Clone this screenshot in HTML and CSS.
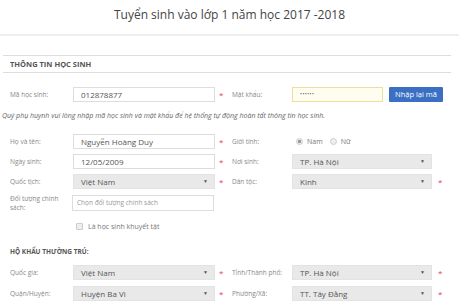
FILE: index.html
```html
<!DOCTYPE html>
<html>
<head>
    <meta charset="utf-8">
    <link rel="stylesheet" href="styles.css">
</head>
<body>
    <div class="page">
        <h1 class="title">Tuyển sinh vào lớp 1 năm học 2017 -2018</h1>
        <div class="section-head">THÔNG TIN HỌC SINH</div>

        <div class="row first">
            <div class="field">
                <label class="lbl">Mã học sinh:</label>
                <div class="input">012878877</div>
                <span class="star">*</span>
            </div>
            <div class="field right">
                <label class="lbl">Mật khẩu:</label>
                <div class="input pass">••••••</div>
                <button class="btn">Nhập lại mã</button>
            </div>
        </div>

        <p class="note">Quý phụ huynh vui lòng nhập mã học sinh và mật khẩu để hệ thống tự động hoàn tất thông tin học sinh.</p>

        <div class="row">
            <div class="field">
                <label class="lbl">Họ và tên:</label>
                <div class="input">Nguyễn Hoàng Duy</div>
                <span class="star">*</span>
            </div>
            <div class="field right">
                <label class="lbl">Giới tính:</label>
                <div class="radios">
                    <span class="radio on"></span><span class="opt">Nam</span>
                    <span class="radio"></span><span class="opt">Nữ</span>
                </div>
            </div>
        </div>

        <div class="row">
            <div class="field">
                <label class="lbl">Ngày sinh:</label>
                <div class="input">12/05/2009</div>
                <span class="star">*</span>
            </div>
            <div class="field right">
                <label class="lbl">Nơi sinh:</label>
                <div class="select">TP. Hà Nội<span class="caret">▼</span></div>
            </div>
        </div>

        <div class="row">
            <div class="field">
                <label class="lbl">Quốc tịch:</label>
                <div class="select">Việt Nam<span class="caret">▼</span></div>
                <span class="star">*</span>
            </div>
            <div class="field right">
                <label class="lbl">Dân tộc:</label>
                <div class="select">Kinh<span class="caret">▼</span></div>
                <span class="star">*</span>
            </div>
        </div>

        <div class="row tall">
            <div class="field">
                <label class="lbl two">Đối tượng chính sách:</label>
                <div class="input placeholder">Chọn đối tượng chính sách</div>
            </div>
        </div>

        <div class="check-row">
            <span class="checkbox"></span><span class="opt">Là học sinh khuyết tật</span>
        </div>

        <div class="sub-head">HỘ KHẨU THƯỜNG TRÚ:</div>

        <div class="row">
            <div class="field">
                <label class="lbl">Quốc gia:</label>
                <div class="select">Việt Nam<span class="caret">▼</span></div>
                <span class="star">*</span>
            </div>
            <div class="field right">
                <label class="lbl">Tỉnh/Thành phố:</label>
                <div class="select">TP. Hà Nội<span class="caret">▼</span></div>
                <span class="star">*</span>
            </div>
        </div>

        <div class="row">
            <div class="field">
                <label class="lbl">Quận/Huyện:</label>
                <div class="select">Huyện Ba Vì<span class="caret">▼</span></div>
                <span class="star">*</span>
            </div>
            <div class="field right">
                <label class="lbl">Phường/Xã:</label>
                <div class="select">TT. Tây Đằng<span class="caret">▼</span></div>
                <span class="star">*</span>
            </div>
        </div>
    </div>
</body>
</html>
```
FILE: styles.css
```css
body {
    margin: 0;
    background: #fff;
    font-family: 'Open Sans', Arial, sans-serif;
    color: #555;
}
.page {
    width: 459px;
}
.title {
    margin: 0;
    padding: 5px 0 9px;
    text-align: center;
    font-size: 12px;
    font-weight: normal;
    color: #444;
    line-height: 20px;
    border-bottom: 2px solid #eee;
}
.section-head {
    margin: 19px 8px 0 3px;
    padding: 0 7px;
    height: 16px;
    line-height: 16px;
    font-size: 7.5px;
    font-weight: bold;
    color: #555;
    border-top: 1px solid #ddd;
    border-bottom: 1px solid #ddd;
}
.row {
    display: flex;
    align-items: center;
    padding-left: 10px;
    height: 20px;
}
.row.first {
    margin-top: 11px;
}
.row.tall {
    height: 23px;
    margin-top: 0;
}
.field {
    display: flex;
    align-items: center;
    width: 222px;
}
.lbl {
    width: 63px;
    flex: none;
    font-size: 6.5px;
    color: #888;
}
.right .lbl {
    width: 60px;
}
.lbl.two {
    width: 50px;
    margin-right: 12px;
    line-height: 9px;
}
.input, .select {
    box-sizing: border-box;
    width: 142px;
    height: 15px;
    line-height: 13px;
    padding: 0 7px;
    font-size: 8px;
    color: #555;
    border: 1px solid #ddd;
    background: #fff;
    position: relative;
}
.right .select {
    width: 140px;
}
.row.tall .input {
    height: 16px;
    line-height: 14px;
    padding: 0 4px;
    font-size: 6.5px;
}
.placeholder {
    color: #999;
}
.input.pass {
    width: 91px;
    background: #fffdf0;
    border-color: #f0df9c;
    font-size: 5px;
    letter-spacing: 0.5px;
}
.select {
    background: #e9e9e9;
    border-color: #e3e3e3;
}
.caret {
    position: absolute;
    right: 6px;
    top: 0;
    font-size: 5px;
    color: #555;
}
.star {
    width: 10px;
    margin-left: 4px;
    color: #e0484b;
    font-size: 8px;
}
.right .star {
    margin-left: 6px;
}
.btn {
    margin-left: 6px;
    height: 15px;
    width: 54px;
    padding: 0;
    border: none;
    border-radius: 1px;
    background: #3a6fc4;
    color: #fff;
    font-family: 'Open Sans', Arial, sans-serif;
    font-size: 7.5px;
    line-height: 15px;
}
.note {
    margin: 5px 0 8px 2px;
    font-size: 7px;
    font-style: italic;
    color: #666;
    line-height: 14px;
}
.radios {
    display: flex;
    align-items: center;
    padding-left: 4px;
}
.radio {
    width: 5px;
    height: 5px;
    border: 1px solid #ccc;
    border-radius: 50%;
    background: #eee;
    margin-right: 4px;
}
.radio.on {
    background: radial-gradient(circle, #999 1.4px, #eee 1.6px);
}
.opt {
    font-size: 7px;
    color: #777;
    margin-right: 7px;
}
.check-row {
    display: flex;
    align-items: center;
    margin: 7px 0 0 76px;
    height: 10px;
}
.checkbox {
    width: 5px;
    height: 5px;
    border: 1px solid #ccc;
    border-radius: 1px;
    background: #eee;
    margin-right: 5px;
}
.sub-head {
    margin: 16px 0 6px 10px;
    font-size: 6.5px;
    font-weight: bold;
    color: #555;
}
.sub-head ~ .row {
    height: 21px;
}
```
